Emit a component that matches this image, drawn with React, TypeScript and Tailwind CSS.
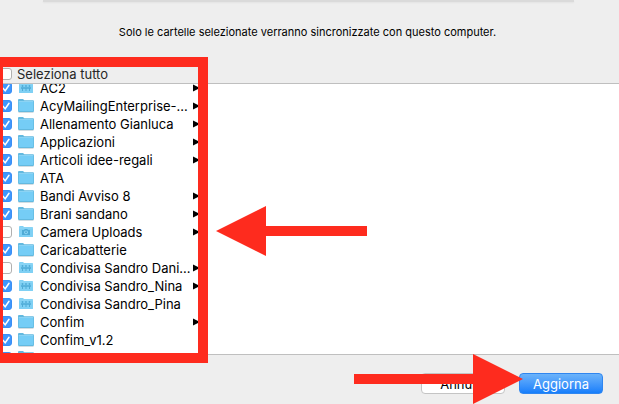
type FolderKind = 'plain' | 'shared' | 'camera';

type Folder = {
  name: string;
  kind?: FolderKind;
  checked?: boolean;
  expandable?: boolean;
};

const folders: Folder[] = [
  { name: 'AC2', kind: 'shared', checked: true, expandable: true },
  { name: 'AcyMailingEnterprise-...', checked: true, expandable: true },
  { name: 'Allenamento Gianluca', checked: true, expandable: true },
  { name: 'Applicazioni', checked: true, expandable: true },
  { name: 'Articoli idee-regali', checked: true, expandable: true },
  { name: 'ATA', checked: true },
  { name: 'Bandi Avviso 8', checked: true, expandable: true },
  { name: 'Brani sandano', checked: true, expandable: true },
  { name: 'Camera Uploads', kind: 'camera', expandable: true },
  { name: 'Caricabatterie', checked: true },
  { name: 'Condivisa Sandro Dani...', kind: 'shared', expandable: true },
  { name: 'Condivisa Sandro_Nina', kind: 'shared', checked: true, expandable: true },
  { name: 'Condivisa Sandro_Pina', kind: 'shared', checked: true },
  { name: 'Confim', checked: true, expandable: true },
  { name: 'Confim_v1.2', checked: true },
  { name: '', checked: true },
];

function FolderIcon({ kind = 'plain' }: { kind?: FolderKind }) {
  if (kind === 'plain') {
    return (
      <svg width="16" height="14" viewBox="0 0 16 14" className="shrink-0" aria-hidden="true">
        <path d="M0 1Q0 0 1 0h4l1.300 1.300H15q1 0 1 1V12q0 1-1 1H1q-1 0-1-1z" fill="#63b9df" />
        <path d="M.7 3h14.600v9H.7z" fill="#75cdf6" />
        <path d="M.7 2.500h14.600" stroke="#8bd3f4" />
        <path d="M.5 13.500h15" stroke="#d3dde2" />
      </svg>
    );
  }
  return (
    <svg width="16" height="14" viewBox="0 0 16 14" className="shrink-0" aria-hidden="true">
      <path d="M1 2q0-1 1-1h3l1 1h8q1 0 1 1v8.500q0 .5-.5.500H1.500q-.5 0-.5-.5z" fill="#7fd0f4" />
      <path d="M1 3h14" stroke="#93d8f6" />
      {kind === 'shared' ? (
        <g fill="#4fabd6">
          <circle cx="4.500" cy="5" r=".9" />
          <circle cx="8" cy="5" r=".9" />
          <circle cx="11.500" cy="5" r=".9" />
          <path d="M3 6.300h10v1.400h-1V10h-1V7.700H8.500V10h-1V7.700H5V10H4V7.700H3z" />
        </g>
      ) : (
        <g fill="#4fabd6">
          <path d="M4 5h2l.8-1h2.400l.8 1h2v5H4z" />
          <circle cx="8" cy="7.300" r="1.900" fill="#8fd6f5" />
          <circle cx="8" cy="7.300" r="1" />
        </g>
      )}
    </svg>
  );
}

function Checkbox({ checked = false, label }: { checked?: boolean; label?: string }) {
  return (
    <span className="grid h-3 w-3 shrink-0">
      <input
        type="checkbox"
        defaultChecked={checked}
        aria-label={label}
        className="peer col-start-1 row-start-1 h-3 w-3 appearance-none rounded-[3px] border border-[#b0b0b0] bg-white checked:border-[#3a8ff5] checked:bg-[#3f97fb]"
      />
      <svg
        viewBox="0 0 12 12"
        className="pointer-events-none invisible col-start-1 row-start-1 h-3 w-3 peer-checked:visible"
        aria-hidden="true"
      >
        <path d="M3 6.300 5.200 8.700 9 3.300" fill="none" stroke="#fff" strokeWidth="1.500" strokeLinecap="round" />
      </svg>
    </span>
  );
}

function FolderRow({ folder }: { folder: Folder }) {
  return (
    <li className="flex h-[18px] items-center">
      <label className="flex min-w-0 flex-1 items-center gap-1.5 whitespace-nowrap">
        <Checkbox checked={folder.checked} label={folder.name || 'Cartella'} />
        <FolderIcon kind={folder.kind} />
        {folder.name}
      </label>
      {folder.expandable && (
        <button aria-label={`Apri ${folder.name}`} className="shrink-0">
          <svg width="7" height="8" viewBox="0 0 7 8" aria-hidden="true">
            <path d="M0 .5 7 4 0 7.500z" fill="#000" />
          </svg>
        </button>
      )}
    </li>
  );
}

export default function App() {
  return (
    <div className="relative flex h-screen flex-col overflow-hidden bg-[#eeeeee] font-['Inter','Liberation_Sans',sans-serif] text-[13px] leading-4 text-black">
      <header className="flex flex-col">
        <div className="mr-0.5">
          <div className="mx-[43px] h-0.5 bg-[#dadada] shadow-xs" />
          <p className="pt-[22px] pr-0.5 pb-[26px] text-center text-[11px]">
            Solo le cartelle selezionate verranno sincronizzate con questo computer.
          </p>
        </div>
        <label className="flex items-center gap-[5px] pb-px text-[#262626]">
          <Checkbox />
          Seleziona tutto
        </label>
      </header>

      <main className="min-h-0 flex-1 overflow-hidden border-y border-[#bfbfbf] bg-white">
        {/* scrolled a few pixels past the first row */}
        <ul className="-mt-[5px] w-[200px]">
          {folders.map((folder) => (
            <FolderRow key={folder.name} folder={folder} />
          ))}
        </ul>
      </main>

      <footer className="flex justify-end gap-3.5 px-4 pt-[18px] pb-2.5">
        <button className="h-[21px] w-[84px] rounded border border-[#c4c4c4] bg-white">Annulla</button>
        <button className="h-[21px] w-[84px] rounded border border-[#2f86f0] bg-linear-to-b from-[#6bb3fa] to-[#147efb] text-white">
          Aggiorna
        </button>
      </footer>

      {/* red annotations */}
      <div className="pointer-events-none absolute top-[57px] bottom-[41px] left-0 w-[208px] border-y-10 border-r-10 border-l-3 border-[#fe2b1e]" />
      <svg width="151" height="50" className="pointer-events-none absolute top-[206px] left-[216px]" aria-hidden="true">
        <path d="M0 25 50 0v20h101v10H50v20z" fill="#fe2b1e" />
      </svg>
      <svg width="169" height="50" className="pointer-events-none absolute right-[96px] bottom-0" aria-hidden="true">
        <path d="M169 25 119 0v20H0v10h119v20z" fill="#fe2b1e" />
      </svg>
    </div>
  );
}
